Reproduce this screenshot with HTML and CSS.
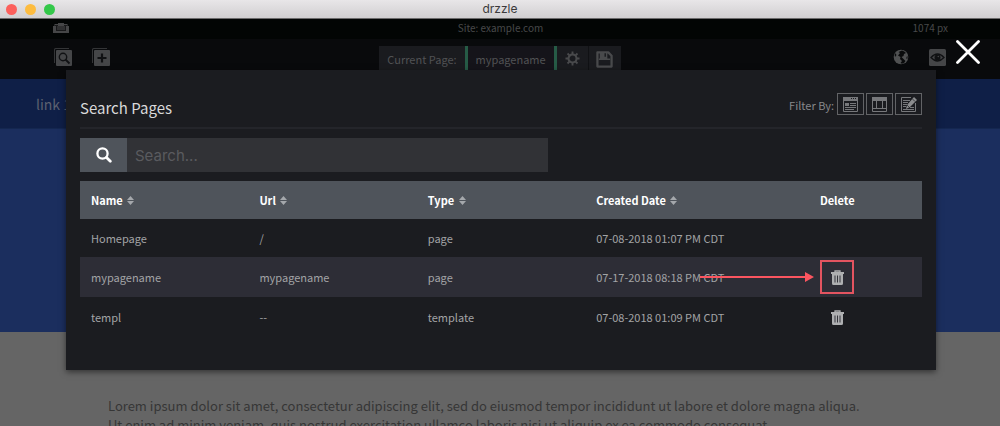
FILE: index.html
```html
<!DOCTYPE html>
<html lang="en">
<head>
<meta charset="utf-8">
<title>drzzle</title>
<link rel="stylesheet" href="styles.css">
</head>
<body>
<div class="app">
  <header class="titlebar">
    <div class="lights"><span class="light red"></span><span class="light yellow"></span><span class="light green"></span></div>
    <div class="window-title">drzzle</div>
  </header>
  <div class="statusbar">
    <svg class="case-icon" width="16" height="10" viewBox="0 0 16 10"><path fill="#454647" d="M1.500 1H5V0h6v1h3.500v2H16v7H0V3h1.500z"/><path fill="#18191a" d="M3 3h1v4h8V3h1v5H3zM2 2h3v1H2zM11 2h3v1h-3z"/><path fill="#303132" d="M4 3h8v4H4z"/></svg>
    <span class="site">Site: example.com</span>
    <span class="viewport">1074 px</span>
  </div>
  <div class="toolbar">
    <div class="tools">
      <button class="tool" aria-label="Search pages"><svg width="18" height="18" viewBox="0 0 18 18"><path fill="#343537" d="M0 1.500Q0 0 1.500 0H15v1H2Q1 1 1 2v13H0z"/><rect x="2" y="2" width="16" height="16" rx="1" fill="#454648"/><circle cx="9" cy="9" r="3.700" fill="none" stroke="#101113" stroke-width="1.400"/><path stroke="#101113" stroke-width="1.800" d="m11.500 11.500 4 4"/></svg></button>
      <button class="tool" aria-label="Add page"><svg width="18" height="18" viewBox="0 0 18 18"><path fill="#343537" d="M0 1.500Q0 0 1.500 0H15v1H2Q1 1 1 2v13H0z"/><rect x="2" y="2" width="16" height="16" rx="1" fill="#454648"/><path stroke="#101113" stroke-width="2.200" d="M10 5.500v9M5.500 10h9"/></svg></button>
    </div>
    <div class="current">
      <span class="current-label">Current Page:</span>
      <span class="current-name">mypagename</span>
      <button class="current-button gear" aria-label="Page settings"><svg width="15" height="15" viewBox="0 0 16 16"><g fill="none" stroke="#494a4c"><circle cx="8" cy="8" r="4.300" stroke-width="2.200"/><path stroke-width="2" d="M8 .5v3M8 12.500v3M.5 8h3M12.500 8h3M2.700 2.700l2 2M11.300 11.300l2 2M2.700 13.300l2-2M11.300 4.700l2-2"/></g></svg></button>
      <button class="current-button save" aria-label="Save"><svg width="17" height="17" viewBox="0 0 18 18"><path fill="none" stroke="#494a4c" stroke-width="2.400" stroke-linejoin="round" d="M1.500 1.500H13l3.500 3.500v11.500h-15z"/><path fill="#494a4c" d="M4 1h8v7H4zM3 8h12v1.500H3z"/><path fill="#1a1b1e" d="M9 2.500h1.500V6H9z"/></svg></button>
    </div>
    <div class="tools tools-right">
      <button class="tool" aria-label="View site"><svg width="16" height="16" viewBox="0 0 16 16"><circle cx="8" cy="8" r="7.300" fill="#505152"/><path fill="#0a0b0c" d="M9 1.500 5.500 3 7 4 5 6.500 7.500 8 7 10l2 2-1.500 2Q9 15 11 14l1.500-2L10 9.500 8.500 8l2-1L11 5l2-1Q11.500 2 9 1.500zM13.500 8l1-1v2.500l-1 .5zM2 4l1.500 2L2 8q-.5-2 0-4z"/></svg></button>
      <button class="tool" aria-label="Preview"><svg width="17" height="17" viewBox="0 0 17 17"><rect width="17" height="17" rx="1.500" fill="#454648"/><path fill="none" stroke="#101113" stroke-width="1.300" d="M2 8.500Q8.500 1.500 15 8.500 8.500 15.500 2 8.500z"/><circle cx="8.500" cy="8.500" r="3" fill="#101113"/><circle cx="9.300" cy="7.500" r=".8" fill="#454648"/></svg></button>
    </div>
  </div>
  <nav class="sitenav"><a class="sitenav-link" href="#">link 1</a></nav>
  <div class="hero"></div>
  <main class="content"><p class="lorem">Lorem ipsum dolor sit amet, consectetur adipiscing elit, sed do eiusmod tempor incididunt ut labore et dolore magna aliqua. Ut enim ad minim veniam, quis nostrud exercitation ullamco laboris nisi ut aliquip ex ea commodo consequat.</p></main>

  <div class="overlay">
    <button class="close" aria-label="Close"><svg width="24" height="24" viewBox="0 0 24 24"><path stroke="#fff" stroke-width="2.800" stroke-linecap="round" d="M1.500 1.500l21 21M22.500 1.500l-21 21"/></svg></button>
    <section class="modal" role="dialog" aria-labelledby="modal-title">
      <div class="modal-head">
        <h1 class="modal-title" id="modal-title">Search Pages</h1>
        <div class="filters">
          <span class="filter-label">Filter By:</span>
          <button class="filter" aria-label="Pages"><svg width="15" height="15" viewBox="0 0 15 15"><path fill="none" stroke="#77787b" d="M.5.5h14v14H.5z"/><path fill="#77787b" d="M0 0h15v4H0zM2 6h4v3H2zM7 6h6v1H7zM7 8h6v1H7zM2 10h11v1H2zM2 12h9v1H2z"/><path fill="#1b1c20" d="M8 1h1v1H8zM10 1h1v1h-1zM12 1h1v1h-1z"/></svg></button>
          <button class="filter" aria-label="Templates"><svg width="15" height="15" viewBox="0 0 15 15"><path fill="none" stroke="#77787b" d="M.5.5h14v14H.5zM4.500 3v8M10.500 3v8M1 11.500h13"/><path fill="#77787b" d="M0 0h15v4H0z"/></svg></button>
          <button class="filter" aria-label="Posts"><svg width="16" height="15" viewBox="0 0 16 15"><path fill="none" stroke="#77787b" d="M10 .5H.5v14h14V6M2 3.500h7M2 5.500h5M2 7.500h4M2 9.500h3M9 10.500h4M2 12.500h11"/><path fill="#8b8c8e" d="m13 0 3 3-7 7-4 2 1-4z"/><path stroke="#1b1c20" stroke-width=".7" d="m11.500 2 2.500 2.500M6 8l2.500 2.500"/></svg></button>
        </div>
      </div>
      <form class="search">
        <button class="search-button" type="button" aria-label="Search"><svg width="16" height="16" viewBox="0 0 16 16"><circle cx="6.500" cy="6.500" r="5.100" fill="none" stroke="#fff" stroke-width="2.300"/><path stroke="#fff" stroke-width="2.800" stroke-linecap="round" d="m10.500 10.500 3.800 3.800"/></svg></button>
        <input class="search-input" type="text" placeholder="Search..." aria-label="Search pages">
      </form>
      <table class="pages">
        <thead>
          <tr>
            <th>Name <svg class="sort" width="7" height="9" viewBox="0 0 7 9"><path d="M3.500 0 7 4H0zM0 5h7L3.500 9z"/></svg></th>
            <th>Url <svg class="sort" width="7" height="9" viewBox="0 0 7 9"><path d="M3.500 0 7 4H0zM0 5h7L3.500 9z"/></svg></th>
            <th>Type <svg class="sort" width="7" height="9" viewBox="0 0 7 9"><path d="M3.500 0 7 4H0zM0 5h7L3.500 9z"/></svg></th>
            <th>Created Date <svg class="sort" width="7" height="9" viewBox="0 0 7 9"><path d="M3.500 0 7 4H0zM0 5h7L3.500 9z"/></svg></th>
            <th class="delete-cell">Delete</th>
          </tr>
        </thead>
        <tbody>
          <tr class="locked"><td>Homepage</td><td>/</td><td>page</td><td>07-08-2018 01:07 PM CDT</td><td class="delete-cell"></td></tr>
          <tr class="striped"><td>mypagename</td><td>mypagename</td><td>page</td><td>07-17-2018 08:18 PM CDT</td><td class="delete-cell">
            <div class="callout">
              <svg class="arrow" width="114" height="10" viewBox="0 0 114 10"><path fill="#fb5560" d="M0 4h105V0l9 5-9 5V6H0z"/></svg>
              <button class="trash" aria-label="Delete mypagename"><svg width="13" height="15" viewBox="0 0 13 15"><path fill="none" stroke="#aeafb1" stroke-width="1.300" d="M4 2.500V1h5v1.500"/><path fill="#aeafb1" d="M0 2h13v2H0zM1 4h11v9.500Q12 15 10.500 15h-8Q1 15 1 13.500z"/><path stroke="#35353c" d="M4 5.500v7M6.500 5.500v7M9 5.500v7"/></svg></button>
            </div>
          </td></tr>
          <tr><td>templ</td><td>--</td><td>template</td><td>07-08-2018 01:09 PM CDT</td><td class="delete-cell">
            <button class="trash" aria-label="Delete templ"><svg width="13" height="15" viewBox="0 0 13 15"><path fill="none" stroke="#aeafb1" stroke-width="1.300" d="M4 2.500V1h5v1.500"/><path fill="#aeafb1" d="M0 2h13v2H0zM1 4h11v9.500Q12 15 10.500 15h-8Q1 15 1 13.500z"/><path stroke="#35353c" d="M4 5.500v7M6.500 5.500v7M9 5.500v7"/></svg></button>
          </td></tr>
        </tbody>
      </table>
    </section>
  </div>
</div>
</body>
</html>
```
FILE: styles.css
```css
* { box-sizing: border-box; }
body { margin: 0; font-family: "Noto Sans CJK SC", "Noto Sans", sans-serif; font-size: 11px; line-height: 16px; }
button { margin: 0; padding: 0; border: 0; background: none; font: inherit; color: inherit; display: block; cursor: pointer; }
svg { display: block; }

.app { position: relative; height: 100vh; overflow: hidden; background: #656565; }

.titlebar { display: grid; grid-template-columns: 1fr auto 1fr; align-items: center; height: 19px; background: linear-gradient(#e8e6e8, #d1cfd1); border-bottom: 1px solid #6c6b6c; }
.lights { display: flex; gap: 8px; padding-left: 6px; }
.light { width: 11px; height: 11px; border-radius: 50%; }
.red { background: #fc605c; }
.yellow { background: #fdbc40; }
.green { background: #34c84a; }
.window-title { font-family: Inter, sans-serif; font-size: 12px; color: #3b3a3b; }

.statusbar { display: grid; grid-template-columns: 1fr auto 1fr; align-items: center; height: 20px; padding: 0 52px 2px 53px; background: #020504; color: #48494a; font-size: 10px; }
.viewport { text-align: right; }

.toolbar { display: grid; grid-template-columns: 1fr auto 1fr; height: 40px; padding: 0 54px 0 54px; background: #090a0c; }
.tools { display: flex; gap: 20px; align-items: center; padding-bottom: 4px; }
.tools-right { justify-content: flex-end; }
.current { display: flex; align-self: end; height: 33px; color: #515254; font-size: 11px; line-height: 26px; }
.current-label { padding: 0 8px; background: #1a1b1f; }
.current-name { padding: 0 8px; background: #15141a; border: solid #265b46; border-width: 0 3px; }
.current-button { display: flex; justify-content: center; padding-top: 5px; width: 32px; background: #1a1b1f; }
.gear { border-right: 1px solid #101114; }

.sitenav { height: 50px; padding: 0 36px; background: #0f1f47; border-bottom: 1px solid #142750; line-height: 50px; font-size: 14px; }
.sitenav-link { color: #5c6170; text-decoration: none; }
.hero { height: 203px; background: #1b2e5e; }
.content { padding: 64px 126px 64px 108px; }
.lorem { margin: 0; font-size: 13px; line-height: 19px; color: #363636; }

.overlay { position: absolute; inset: 70px 64px auto 66px; }
.close { position: absolute; right: -44px; top: -30px; }
.modal { padding: 23px 14px 33px; background: #1b1c20; box-shadow: 0 2px 6px rgba(0, 0, 0, .5); }
.modal-head { display: flex; justify-content: space-between; height: 36px; border-bottom: 2px solid #24252a; }
.modal-title { margin: 0; font-size: 15px; font-weight: 400; line-height: 30px; color: #d9d9da; }
.filters { display: flex; gap: 2px; align-items: flex-start; }
.filter-label { line-height: 24px; color: #87888a; font-size: 11px; padding-right: 1px; }
.filter { display: flex; align-items: center; justify-content: center; width: 27px; height: 22px; border: 1px solid #626366; }

.search { display: flex; width: 468px; max-width: 100%; height: 34px; margin: 9px 0; }
.search-button { display: flex; align-items: center; justify-content: center; width: 47px; background: #4f545b; }
.search-input { flex: 1; min-width: 0; padding: 0 8px; border: 0; background: #313236; color: #d9d9da; font-family: Inter, sans-serif; font-size: 15px; }
.search-input::placeholder { color: #5a5b5f; opacity: 1; }

.pages { width: 100%; table-layout: fixed; border-collapse: collapse; color: #a3a4a6; font-size: 11px; }
.pages th, .pages td { padding: 0 11px; text-align: left; }
.pages th { height: 38px; background: #4f545b; color: #fff; font-weight: 700; }
.pages td { height: 40px; }
.pages .locked td { height: 38px; }
.striped { background: #2d2d36; }
.pages .delete-cell { padding: 0 55px 0 54px; text-align: center; }
.sort { display: inline-block; margin-left: 2px; fill: #a5a8ac; }
.trash { margin: 0 auto; }
.callout { position: relative; display: flex; align-items: center; width: 34px; height: 34px; margin: 0 auto; border: 2px solid #e35460; }
.arrow { position: absolute; right: 38px; top: 10px; }
```
